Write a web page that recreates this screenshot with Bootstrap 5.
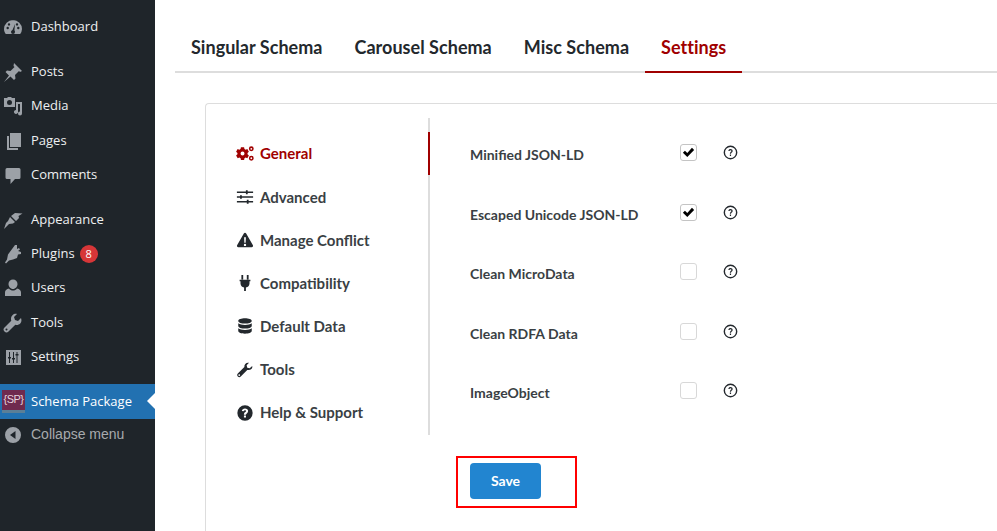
<!DOCTYPE html>
<html lang="en">
<head>
<meta charset="utf-8">
<title>Schema Package Settings</title>
<link href="https://cdn.jsdelivr.net/npm/bootstrap@5.3.0/dist/css/bootstrap.min.css" rel="stylesheet">
<style>
html,body{height:531px;overflow:hidden;background:#fff}
.shell{width:997px;height:531px;overflow:hidden}
.wp-side{width:155px;flex:none;background:#1f252a;padding-top:10px;font-family:"Open Sans","Liberation Sans",sans-serif;font-size:13px;color:#eef0f1}
.wp-item{height:34.3px;padding-left:3px;gap:8px}
.wp-item svg{width:20px;height:20px;flex:none;fill:#9ca1a7}
.wp-gap{margin-top:10.5px}
.wp-current{background:#2271b1;color:#fff;position:relative;padding-left:2px;gap:6px;margin-top:10.5px}
.wp-current:after{content:"";position:absolute;right:0;top:9px;border:8px solid transparent;border-right-color:#fff;border-left:0}
.sp-logo{width:23px;height:23px;flex:none;background:#6f2a4e;border-bottom:3px solid #5b7f97;color:#e6d6de;font-size:11px;line-height:19px;text-align:center;letter-spacing:-.5px;font-family:"Liberation Sans",sans-serif}
.wp-collapse{color:#a7aaad;font-family:"Liberation Sans",sans-serif;font-size:14px;height:32px}
.wp-count{width:18px;height:18px;border-radius:50%;background:#d63638;color:#fff;font-size:11px;line-height:18px;text-align:center;margin-left:-3px}
.main-area{padding:20px 0 0 20px;font-family:Lato,"Liberation Sans",sans-serif;min-width:0}
.top-tabs{border-bottom:2px solid #ddd;height:53px}
.top-link{font-size:18px;font-weight:700;color:#23282d;padding:0 16px;height:53px;line-height:55px;letter-spacing:.03px;text-decoration:none}
.top-link.on{color:#a00000;border-bottom:2px solid #a00000}
.panel-box{margin:30px 0 0 30px;border:1px solid #ddd;border-right:0;border-bottom:0;border-top-left-radius:4px;height:440px;padding:14px 0 0 0}
.side-tabs{width:224px;flex:none;border-right:2px solid #ddd;height:317px;padding-top:14px}
.side-link{height:43.2px;padding-left:30px;gap:6px;font-size:15px;font-weight:700;color:#3a3f44;position:relative}
.side-link svg{width:18px;height:18px;flex:none;fill:#23282d}
.side-link.on{color:#a00000}
.side-link.on svg{fill:#a00000}
.side-link.on:after{content:"";position:absolute;right:-2px;top:0;width:2px;height:43px;background:#a00000}
.opt-col{padding:7px 0 0 40px}
.opt-row{height:59.5px}
.opt-name{width:210px;font-size:14px;font-weight:700;color:#3a3f44}
.tick{width:17px;height:17px;border:1px solid #c4c4c4;border-radius:3px;background:#fff;flex:none;margin-top:-4px}
.tick svg{display:block;width:15px;height:15px}
.tick.off{border-color:#d8d8d8}
.hint{width:15px;height:15px;margin:-4px 0 0 26px;flex:none}
.save-wrap{margin:21px 0 0 250px;width:121px;height:52px;border:2px solid #f00;padding:5px 0 0 12px}
.save-btn{width:71px;height:36px;background:#2285d0;border:0;border-radius:4px;color:#fff;font-weight:700;font-size:14px;padding:0 0 2px;display:block}
</style>
</head>
<body>
<div class="shell d-flex">
  <nav class="wp-side">
    <div class="wp-item d-flex align-items-center"><svg viewBox="0 0 20 20"><path d="M10 3a9 9 0 0 0-9 9c0 2 .7 3.700 1.800 5h14.400a9 9 0 0 0 1.800-5 9 9 0 0 0-9-9zM6 6.200a1.200 1.200 0 1 1 0 2.400 1.200 1.200 0 0 1 0-2.400zM3.500 11a1.200 1.200 0 1 1 2.400 0 1.200 1.200 0 0 1-2.400 0zm8.500 4a2 2 0 0 1-4 0c0-1 1-1.700 1.500-1.900L12 7l-.6 6.300c.4.400.6 1 .6 1.700zm2-6.400a1.200 1.200 0 1 1 0-2.400 1.200 1.200 0 0 1 0 2.400zm1.300 3.600a1.200 1.200 0 1 1 0-2.400 1.200 1.200 0 0 1 0 2.400z"/></svg><span>Dashboard</span></div>
    <div class="wp-item wp-gap d-flex align-items-center"><svg viewBox="0 0 20 20"><path d="M11 1l8 8-2 1-1-1-4 4 .5 3.500-1.500 1.500-3.500-3.500L1 20l5-6.500L2.500 10 4 8.500l3.500.5 4-4-1-1z"/></svg><span>Posts</span></div>
    <div class="wp-item d-flex align-items-center"><svg viewBox="0 0 20 20"><path fill-rule="evenodd" d="M1 2h3l1-1h3l1 1h3v9H1zm5.500 2a2.500 2.500 0 1 0 0 5 2.500 2.500 0 0 0 0-5zM13 6h6v11.500a2 2 0 1 1-2-2V8h-2v7a2 2 0 0 1-4 1.500 2 2 0 0 1 2-2.500z"/></svg><span>Media</span></div>
    <div class="wp-item d-flex align-items-center"><svg viewBox="0 0 20 20"><path d="M7 2h11v14H7zM4 5h2v12h9v2H4z"/></svg><span>Pages</span></div>
    <div class="wp-item d-flex align-items-center"><svg viewBox="0 0 20 20"><path d="M4 3h12a1.500 1.500 0 0 1 1.500 1.500v8A1.500 1.500 0 0 1 16 14h-4l-4.500 5v-5H4a1.500 1.500 0 0 1-1.500-1.500v-8A1.500 1.500 0 0 1 4 3z"/></svg><span>Comments</span></div>
    <div class="wp-item wp-gap d-flex align-items-center"><svg viewBox="0 0 20 20"><path d="M19.500 3.500 12 3 8 6l5 5 3-3-.5-2zM7 7l5 5-2 1.500L6 14l-5 5 2-6 2-2z"/></svg><span>Appearance</span></div>
    <div class="wp-item d-flex align-items-center"><svg viewBox="0 0 20 20"><path d="M12 1h2v4l2-1 1 1.500-2 1.500 3 1v2l-3 .5-1 3.500-4 1.500-4 1-3 3-1-1 2-3 1-5z"/></svg><span>Plugins</span><span class="wp-count">8</span></div>
    <div class="wp-item d-flex align-items-center"><svg viewBox="0 0 20 20"><path d="M10 1.500a4.500 4.500 0 0 1 4.500 4.500c0 2.500-2 5-4.500 5S5.500 8.500 5.500 6A4.500 4.500 0 0 1 10 1.500zM6 10.500c1 1.500 2.500 2 4 2s3-.5 4-2c2.500.5 4 2 4 4v3.500H2v-3.500c0-2 1.500-3.500 4-4z"/></svg><span>Users</span></div>
    <div class="wp-item d-flex align-items-center"><svg viewBox="0 0 20 20"><path d="M18 5l-3 3-3-1-1-3 3-3c-3-.7-6 1.500-6 5 0 .6.100 1.200.3 1.700L1.500 14.500a2.800 2.800 0 0 0 4 4l6.800-6.800c3.500 1.300 7.500-2 5.700-6.700zM3.500 17.500a1 1 0 1 1 0-2 1 1 0 0 1 0 2z"/></svg><span>Tools</span></div>
    <div class="wp-item d-flex align-items-center"><svg viewBox="0 0 20 20"><path fill-rule="evenodd" d="M3 3h15v15H3zM6 5v5H5v1.500h1V16h1v-4.500h1V10H7V5zm4 0v6H9v1.500h1V16h1v-3.500h1V11h-1V5zm3.500 0v2h-1v1.500h1V16h1V8.500h1V7h-1V5z"/></svg><span>Settings</span></div>
    <div class="wp-item wp-current d-flex align-items-center"><div class="sp-logo">{SP}</div><span>Schema Package</span></div>
    <div class="wp-item wp-collapse d-flex align-items-center"><svg viewBox="0 0 20 20"><path fill-rule="evenodd" d="M10 2a8 8 0 1 1 0 16 8 8 0 0 1 0-16zm2.500 4L7 10l5.500 4z"/></svg><span>Collapse menu</span></div>
  </nav>
  <main class="main-area flex-grow-1">
    <div class="top-tabs d-flex">
      <a class="top-link" href="#">Singular Schema</a>
      <a class="top-link" href="#">Carousel Schema</a>
      <a class="top-link" href="#">Misc Schema</a>
      <a class="top-link on" href="#">Settings</a>
    </div>
    <div class="panel-box">
      <div class="d-flex">
        <div class="side-tabs">
          <div class="side-link on d-flex align-items-center"><svg viewBox="0 0 20 20"><path fill-rule="evenodd" d="M5.500 2.500h3.500l.4 2 1.300.7 1.900-.7 1.700 3-1.500 1.300v1.500l1.500 1.300-1.700 3-1.900-.7-1.300.7-.4 2H5.500l-.4-2-1.300-.7-1.900.7L.1 11.600l1.500-1.300V8.800L.1 7.500l1.700-3 1.900.7 1.300-.7zM7.250 7.300a2.200 2.200 0 1 0 0 4.400 2.200 2.200 0 0 0 0-4.400zM17 1.500a2.700 2.700 0 1 1 0 5.400 2.700 2.700 0 0 1 0-5.400zm0 1.700a1 1 0 1 0 0 2 1 1 0 0 0 0-2zM17 12a2.700 2.700 0 1 1 0 5.400 2.700 2.700 0 0 1 0-5.400zm0 1.700a1 1 0 1 0 0 2 1 1 0 0 0 0-2z"/></svg><span>General</span></div>
          <div class="side-link d-flex align-items-center"><svg viewBox="0 0 20 20"><path d="M1 4h10V2.500h2V4h6v1.500h-6V7h-2V5.500H1zM1 9.300h3.500V8h2v1.300H19v1.500H6.500V12h-2v-1.200H1zM1 14.500h11V13h2v1.500h5V16h-5v1.500h-2V16H1z"/></svg><span>Advanced</span></div>
          <div class="side-link d-flex align-items-center"><svg viewBox="0 0 20 20"><path fill-rule="evenodd" d="M10 2c.5 0 1 .3 1.300.8l7.500 13c.5 1-.2 2.200-1.300 2.200h-15c-1.100 0-1.800-1.200-1.300-2.200l7.500-13C9 2.300 9.500 2 10 2zM9 7l.3 6h1.400L11 7zm1 7.200a1.300 1.300 0 1 0 0 2.600 1.300 1.300 0 0 0 0-2.600z"/></svg><span>Manage Conflict</span></div>
          <div class="side-link d-flex align-items-center"><svg viewBox="0 0 20 20"><path d="M6 1h2v5H6zM12 1h2v5h-2zM4 6.500h12V8h-1v2.500a5 5 0 0 1-4 4.500v4H9v-4a5 5 0 0 1-4-4.500V8H4z"/></svg><span>Compatibility</span></div>
          <div class="side-link d-flex align-items-center"><svg viewBox="0 0 20 20"><path d="M10 1.500c4 0 7.500 1.200 7.500 2.900S14 7.300 10 7.300 2.500 6.100 2.500 4.400 6 1.500 10 1.500zM2.500 7c1.600 1.200 4.300 1.900 7.500 1.900s5.900-.7 7.500-1.900v3c0 1.700-3.500 2.900-7.500 2.900S2.500 11.700 2.500 10zM2.500 12.600c1.600 1.200 4.300 1.900 7.500 1.900s5.900-.7 7.500-1.900v3c0 1.700-3.500 2.900-7.500 2.900s-7.500-1.200-7.500-2.900z"/></svg><span>Default Data</span></div>
          <div class="side-link d-flex align-items-center"><svg viewBox="0 0 20 20"><path fill-rule="evenodd" d="M18 5.500l-2.800 2.600-2.700-.7-.7-2.600L14.500 2c-3-.7-5.500 1.500-5.200 4.700L2 14a2.300 2.300 0 0 0 0 3.300c1 1 2.300 1 3.300 0l7.200-7.300c3.300.4 6.300-1.500 5.500-4.500zM3.600 16.600a1 1 0 1 1 0-2 1 1 0 0 1 0 2z"/></svg><span>Tools</span></div>
          <div class="side-link d-flex align-items-center"><svg viewBox="0 0 20 20"><path fill-rule="evenodd" d="M10 1.500a8.500 8.500 0 1 1 0 17 8.500 8.500 0 0 1 0-17zM10 5C8 5 6.700 6 6.500 7.700l2 .4C8.700 7.300 9.200 6.900 10 6.900c.7 0 1.200.4 1.200 1 0 1.200-2.400 1.500-2.400 3.600v.5h2.300c0-1.800 2.400-1.900 2.400-4.300C13.500 6 11.900 5 10 5zM8.800 12.800V15h2.300v-2.200z"/></svg><span>Help &amp; Support</span></div>
        </div>
        <div class="opt-col">
          <div class="opt-row d-flex align-items-center"><span class="opt-name">Minified JSON-LD</span><span class="tick"><svg viewBox="0 0 16 16"><path d="M2 8.200l2.200-2.200 2.500 2.500L11.700 3l2.300 2.300-7.300 7.400z"/></svg></span><svg class="hint" viewBox="0 0 16 16"><circle cx="8" cy="8" r="6.600" fill="none" stroke="#23282d" stroke-width="1.500"/><path d="M5.700 6.300C5.900 5 6.900 4.300 8 4.300c1.300 0 2.300.8 2.300 2 0 1.600-1.700 1.600-1.700 3H7.300c0-2 1.700-2 1.700-3 0-.5-.5-.8-1-.8s-.9.300-1.100.9zM7.300 10.200h1.300v1.400H7.300z" fill="#23282d"/></svg></div>
          <div class="opt-row d-flex align-items-center"><span class="opt-name">Escaped Unicode JSON-LD</span><span class="tick"><svg viewBox="0 0 16 16"><path d="M2 8.200l2.200-2.200 2.500 2.500L11.700 3l2.300 2.300-7.300 7.400z"/></svg></span><svg class="hint" viewBox="0 0 16 16"><circle cx="8" cy="8" r="6.600" fill="none" stroke="#23282d" stroke-width="1.500"/><path d="M5.700 6.300C5.900 5 6.900 4.300 8 4.300c1.300 0 2.300.8 2.300 2 0 1.600-1.700 1.600-1.700 3H7.300c0-2 1.700-2 1.700-3 0-.5-.5-.8-1-.8s-.9.300-1.100.9zM7.300 10.200h1.300v1.400H7.300z" fill="#23282d"/></svg></div>
          <div class="opt-row d-flex align-items-center"><span class="opt-name">Clean MicroData</span><span class="tick off"></span><svg class="hint" viewBox="0 0 16 16"><circle cx="8" cy="8" r="6.600" fill="none" stroke="#23282d" stroke-width="1.500"/><path d="M5.700 6.300C5.900 5 6.900 4.300 8 4.300c1.300 0 2.300.8 2.300 2 0 1.600-1.700 1.600-1.700 3H7.300c0-2 1.700-2 1.700-3 0-.5-.5-.8-1-.8s-.9.300-1.100.9zM7.300 10.200h1.300v1.400H7.300z" fill="#23282d"/></svg></div>
          <div class="opt-row d-flex align-items-center"><span class="opt-name">Clean RDFA Data</span><span class="tick off"></span><svg class="hint" viewBox="0 0 16 16"><circle cx="8" cy="8" r="6.600" fill="none" stroke="#23282d" stroke-width="1.500"/><path d="M5.700 6.300C5.900 5 6.900 4.300 8 4.300c1.300 0 2.300.8 2.300 2 0 1.600-1.700 1.600-1.700 3H7.300c0-2 1.700-2 1.700-3 0-.5-.5-.8-1-.8s-.9.300-1.100.9zM7.300 10.200h1.300v1.400H7.300z" fill="#23282d"/></svg></div>
          <div class="opt-row d-flex align-items-center"><span class="opt-name">ImageObject</span><span class="tick off"></span><svg class="hint" viewBox="0 0 16 16"><circle cx="8" cy="8" r="6.600" fill="none" stroke="#23282d" stroke-width="1.500"/><path d="M5.700 6.300C5.900 5 6.900 4.300 8 4.300c1.300 0 2.300.8 2.300 2 0 1.600-1.700 1.600-1.700 3H7.300c0-2 1.700-2 1.700-3 0-.5-.5-.8-1-.8s-.9.300-1.100.9zM7.300 10.200h1.300v1.400H7.300z" fill="#23282d"/></svg></div>
        </div>
      </div>
      <div class="save-wrap"><button class="save-btn" type="button">Save</button></div>
    </div>
  </main>
</div>
<script src="https://cdn.jsdelivr.net/npm/bootstrap@5.3.0/dist/js/bootstrap.bundle.min.js"></script>
</body>
</html>
